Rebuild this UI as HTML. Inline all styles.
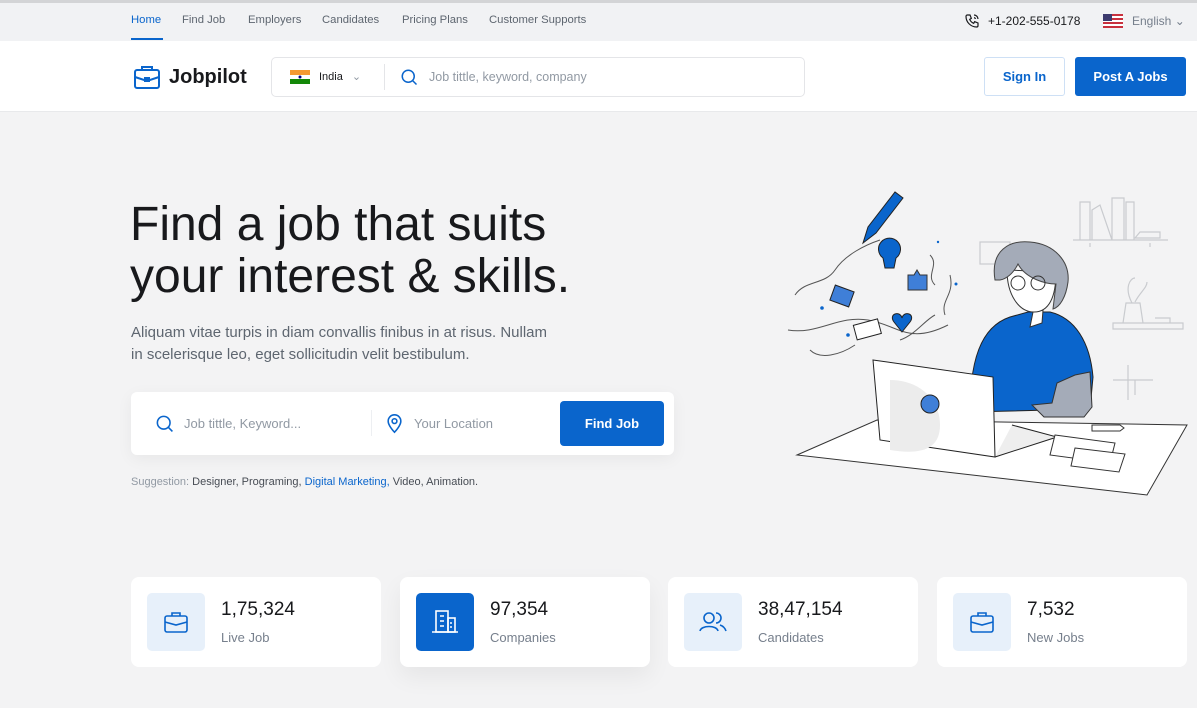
<!DOCTYPE html>
<html><head><meta charset="utf-8"><style>
*{margin:0;padding:0;box-sizing:border-box}
body{width:1197px;height:708px;overflow:hidden;background:#f3f3f4;font-family:"Liberation Sans",sans-serif;position:relative;color:#18191c}
.abs{position:absolute}
.top{left:0;top:0;width:1197px;height:41px;background:#f1f2f4;border-top:3px solid #d3d4d6}
.nav a{position:absolute;top:14px;font-size:11.3px;color:#5e6670;text-decoration:none}
.hdr{left:0;top:41px;width:1197px;height:71px;background:#fff;border-bottom:1px solid #e8e9eb}
.card{background:#fff;border-radius:8px;height:90px;top:577px;width:250px}
.ic{position:absolute;left:16px;top:16px;width:58px;height:58px;border-radius:5px;background:#e7f0fa;display:flex;align-items:center;justify-content:center}
.num{position:absolute;left:90px;top:22px;font-size:19px;color:#18191c}
.lbl{position:absolute;left:90px;top:53px;font-size:13px;color:#767f8c}
</style></head><body>
<div class="abs top"></div>
<div class="nav">
<a style="left:131px;color:#0a65cc">Home</a>
<div class="abs" style="left:131px;top:38px;width:32px;height:2px;background:#0a65cc"></div>
<a style="left:182px">Find Job</a><a style="left:248px">Employers</a><a style="left:322px">Candidates</a><a style="left:402px">Pricing Plans</a><a style="left:489px">Customer Supports</a>
</div>
<svg class="abs" style="left:964px;top:13px" width="16" height="16" viewBox="0 0 24 24" fill="none" stroke="#18191c" stroke-width="1.8"><path d="M5 3h4l2 5-2.5 1.5a11 11 0 0 0 6 6L16 13l5 2v4a2 2 0 0 1-2 2A16 16 0 0 1 3 5a2 2 0 0 1 2-2"/><path d="M15 3a6 6 0 0 1 6 6M15 7a2 2 0 0 1 2 2"/></svg>
<div class="abs" style="left:988px;top:14px;font-size:12px;color:#18191c">+1-202-555-0178</div>
<svg class="abs" style="left:1103px;top:14px" width="20" height="14"><rect width="20" height="14" fill="#fff"/><g fill="#c8313e"><rect y="0" width="20" height="2"/><rect y="4" width="20" height="2"/><rect y="8" width="20" height="2"/><rect y="12" width="20" height="2"/></g><rect width="9" height="7" fill="#3c3b6e"/></svg>
<div class="abs" style="left:1132px;top:14px;font-size:12px;color:#767f8c">English ⌄</div>

<div class="abs hdr"></div>
<svg class="abs" style="left:133px;top:64px" width="28" height="26" viewBox="0 0 28 26" fill="none" stroke="#0a65cc" stroke-width="2"><rect x="2" y="6" width="24" height="18" rx="2"/><path d="M9 6V3h10v3M2 13l12 4 12-4"/><rect x="12" y="14" width="4" height="3" fill="#0a65cc"/></svg>
<div class="abs" style="left:169px;top:66px;font-size:20px;font-weight:bold;color:#18191c">Jobpilot</div>
<div class="abs" style="left:271px;top:57px;width:534px;height:40px;border:1px solid #e4e5e8;border-radius:5px;background:#fff"></div>
<svg class="abs" style="left:290px;top:70px" width="20" height="14"><rect width="20" height="5" fill="#f49a32"/><rect y="5" width="20" height="4" fill="#fff"/><rect y="9" width="20" height="5" fill="#138808"/><circle cx="10" cy="7" r="1.5" fill="#000080"/></svg>
<div class="abs" style="left:319px;top:70px;font-size:11px;color:#18191c">India <span style="color:#9199a3;margin-left:6px">⌄</span></div>
<div class="abs" style="left:384px;top:64px;width:1px;height:26px;background:#e4e5e8"></div>
<svg class="abs" style="left:400px;top:68px" width="18" height="18" viewBox="0 0 24 24" fill="none" stroke="#0a65cc" stroke-width="2"><circle cx="11" cy="11" r="8"/><path d="M17 17l5 5"/></svg>
<div class="abs" style="left:429px;top:70px;font-size:12.5px;color:#9199a3">Job tittle, keyword, company</div>
<div class="abs" style="left:984px;top:57px;width:81px;height:39px;border:1px solid #cee0f5;border-radius:3px;background:#fff;color:#0a65cc;font-size:13px;font-weight:bold;text-align:center;line-height:37px">Sign In</div>
<div class="abs" style="left:1075px;top:57px;width:111px;height:39px;border-radius:3px;background:#0a65cc;color:#fff;font-size:13px;font-weight:bold;text-align:center;line-height:39px">Post A Jobs</div>

<div class="abs" style="left:130px;top:199px;font-size:48px;line-height:52px;color:#18191c;letter-spacing:0px">Find a job that suits<br>your interest &amp; skills.</div>
<div class="abs" style="left:131px;top:322px;font-size:15px;line-height:22px;color:#5e6670">Aliquam vitae turpis in diam convallis finibus in at risus. Nullam<br>in scelerisque leo, eget sollicitudin velit bestibulum.</div>
<div class="abs" style="left:131px;top:392px;width:543px;height:63px;background:#fff;border-radius:6px;box-shadow:0 4px 16px rgba(0,0,0,.05)"></div>
<svg class="abs" style="left:155px;top:414px" width="19" height="19" viewBox="0 0 24 24" fill="none" stroke="#0a65cc" stroke-width="2"><circle cx="11" cy="11" r="8"/><path d="M17 17l5 5"/></svg>
<div class="abs" style="left:184px;top:416px;font-size:13px;color:#9199a3">Job tittle, Keyword...</div>
<div class="abs" style="left:371px;top:410px;width:1px;height:26px;background:#edeff2"></div>
<svg class="abs" style="left:385px;top:413px" width="19" height="21" viewBox="0 0 24 26" fill="none" stroke="#0a65cc" stroke-width="2"><path d="M12 24s-8-8-8-14a8 8 0 0 1 16 0c0 6-8 14-8 14z"/><circle cx="12" cy="10" r="3"/></svg>
<div class="abs" style="left:414px;top:416px;font-size:13px;color:#9199a3">Your Location</div>
<div class="abs" style="left:560px;top:401px;width:104px;height:45px;background:#0a65cc;border-radius:4px;color:#fff;font-weight:bold;font-size:13px;text-align:center;line-height:45px">Find Job</div>
<div class="abs" style="left:131px;top:476px;font-size:11px;color:#9199a3">Suggestion: <span style="color:#474c54">Designer, Programing, </span><span style="color:#0a65cc">Digital Marketing,</span><span style="color:#474c54"> Video, Animation.</span></div>

<svg class="abs" style="left:780px;top:180px" width="417" height="320" viewBox="0 0 417 320" fill="none" stroke="#333" stroke-width="1">
<g stroke="#c9cbcf" stroke-width="1.2"><path d="M293 60h95M300 60V22h10v38M312 60V30l8-5 12 35M332 60V18h12v42M346 60V22h8v38M310 63v4M370 63v4M355 58h25v-6h-20z"/><rect x="200" y="62" width="30" height="22"/><path d="M333 143h70v6h-70zM343 143l3-20h14l3 20M352 123c-8-15-2-25 3-25M355 122c5-10 12-14 12-20M375 138h15v5"/><path d="M333 200h40M348 185v35M355 200v15"/></g>
<path d="M15 115c10-15 30-10 40-25s30-25 45-30M8 150c30 5 50-15 80-10s40 25 80 5M30 170c10 10 30 5 45-5M120 160c15-5 25-20 35-25M150 75c10 10-5 20 5 30M170 95c5 20-10 25-5 40" stroke="#555"/>
<path d="M83 63l5-16 27-35 8 6-27 35z" fill="#0a65cc" stroke="#222"/>
<path d="M103 78a11 11 0 1 1 13 0l-2 10h-9z" fill="#0a65cc" stroke="#222"/>
<rect x="52" y="108" width="20" height="16" fill="#3f7fd8" stroke="#222" transform="rotate(20 62 116)"/>
<path d="M128 95h6l3-5 3 5h7v15h-19z" fill="#3f7fd8" stroke="#333"/>
<path d="M114 142c-6-8 6-12 8-4 2-8 14-4 8 4l-8 10z" fill="#0a65cc" stroke="#222"/>
<rect x="75" y="142" width="25" height="15" fill="#fff" stroke="#222" transform="rotate(-15 87 150)"/>
<g fill="#0a65cc" stroke="none"><circle cx="42" cy="128" r="1.8"/><circle cx="68" cy="155" r="1.8"/><circle cx="176" cy="104" r="1.5"/><circle cx="158" cy="62" r="1.2"/></g>
<path d="M190 232c0-50 10-85 40-95l18-5 22 0c25 6 40 30 43 65l-3 32z" fill="#0a65cc" stroke="#222"/>
<path d="M253 132l-3 15 12-4 1-13z" fill="#fff"/>
<path d="M227 90c0 25 12 42 27 42s22-15 22-40z" fill="#fff" stroke="#333"/>
<path d="M215 100c-5-30 15-40 35-38 25 2 40 20 38 40-2 15-8 25-15 27l3-25c-10 0-30-5-38-20-5 10-12 15-18 16z" fill="#a4abb8" stroke="#444"/>
<circle cx="238" cy="103" r="7" stroke="#333"/><circle cx="258" cy="103" r="7" stroke="#333"/>
<path d="M295 195l15-3 2 35-8 10h-40l-12-12 20-2 5-20z" fill="#a4abb8" stroke="#333"/>
<path d="M17 275l80-35 310 5-40 70z" fill="#fff" stroke="#333"/>
<path d="M93 180l120 17 2 80-115-17z" fill="#fff" stroke="#222"/>
<path d="M215 277l62-20-45-12" stroke="#222" fill="#eee"/>
<path d="M110 200c30 0 50 20 50 45s-20 30-50 25z" fill="#ececec" stroke="none"/>
<circle cx="150" cy="224" r="9" fill="#3f7fd8" stroke="#222"/>
<path d="M275 255l60 8-5 20-60-8z" fill="#fff" stroke="#333"/><path d="M295 268l50 6-6 18-48-6z" fill="#fff" stroke="#333"/>
<path d="M312 245h28l4 3-4 3h-28z" fill="#fff" stroke="#333"/>
</svg>

<div class="abs card" style="left:131px"><div class="ic"><svg width="28" height="26" viewBox="0 0 28 26" fill="none" stroke="#0a65cc" stroke-width="1.6"><rect x="3" y="7" width="22" height="16" rx="2"/><path d="M10 7V4h8v3M3 13l11 3 11-3"/></svg></div><div class="num">1,75,324</div><div class="lbl">Live Job</div></div>
<div class="abs card" style="left:400px;box-shadow:0 10px 24px rgba(0,0,0,.06)"><div class="ic" style="background:#0a65cc"><svg width="30" height="28" viewBox="0 0 30 28" fill="none" stroke="#fff" stroke-width="1.6"><rect x="6" y="3" width="12" height="21"/><rect x="18" y="10" width="7" height="14"/><path d="M2 24h26M10 8h4M10 13h4M10 18h4M20 15h2M20 19h2"/></svg></div><div class="num">97,354</div><div class="lbl">Companies</div></div>
<div class="abs card" style="left:668px"><div class="ic"><svg width="30" height="26" viewBox="0 0 30 26" fill="none" stroke="#0a65cc" stroke-width="1.6"><circle cx="11" cy="9" r="5"/><path d="M2 22c1-6 17-6 18 0M18 4a5 5 0 0 1 0 10M22 16c3 1 5 3 6 6"/></svg></div><div class="num">38,47,154</div><div class="lbl">Candidates</div></div>
<div class="abs card" style="left:937px"><div class="ic"><svg width="28" height="26" viewBox="0 0 28 26" fill="none" stroke="#0a65cc" stroke-width="1.6"><rect x="3" y="7" width="22" height="16" rx="2"/><path d="M10 7V4h8v3M3 13l11 3 11-3"/></svg></div><div class="num">7,532</div><div class="lbl">New Jobs</div></div>
</body></html>
